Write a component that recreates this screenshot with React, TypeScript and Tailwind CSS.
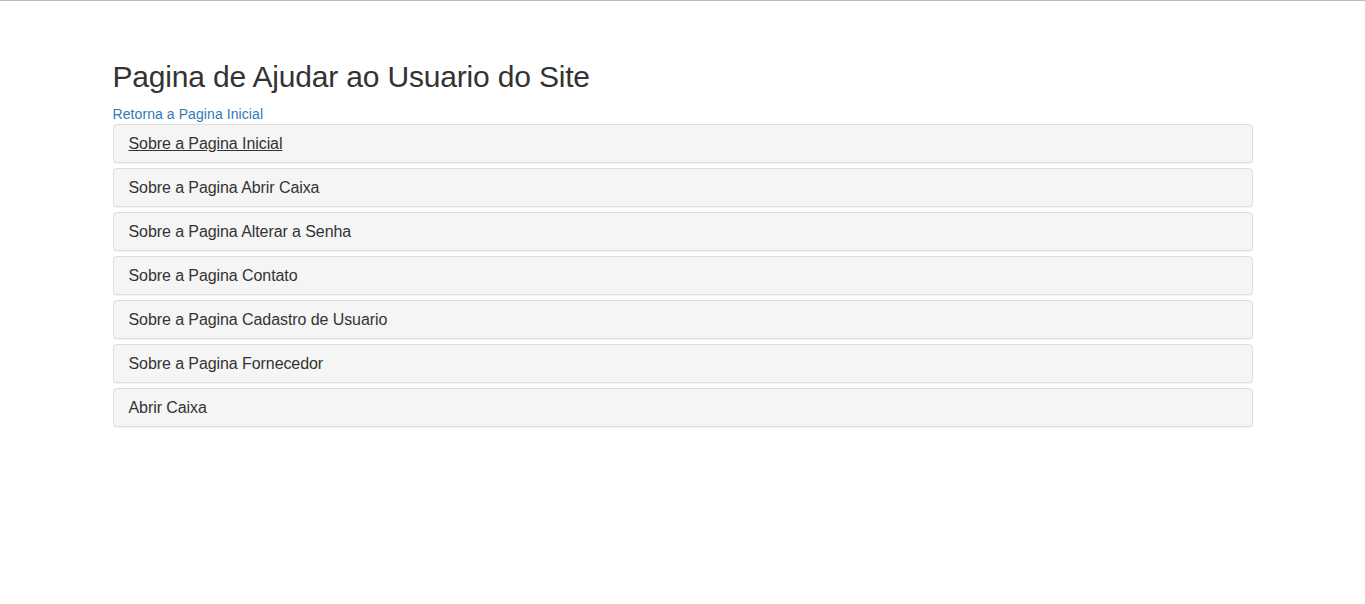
import React from 'react';

const sections = [
    "Sobre a Pagina Inicial",
    "Sobre a Pagina Abrir Caixa",
    "Sobre a Pagina Alterar a Senha",
    "Sobre a Pagina Contato",
    "Sobre a Pagina Cadastro de Usuario",
    "Sobre a Pagina Fornecedor",
    "Abrir Caixa"
];

const App = () => {
    return (
        <div className="min-h-[604px] bg-white border-t border-[#bbbbbb] text-[#333333] font-['Liberation_Sans',Arial,sans-serif]">
            <div className="w-[1170px] mx-auto px-[15px] pt-[59px]">
                <h2 className="text-[30px] leading-[33px] font-normal tracking-[-0.18px] mb-[11px]">
                    Pagina de Ajudar ao Usuario do Site
                </h2>
                <a href="#" className="block text-[14px] leading-[20px] tracking-[0.08px] text-[#337ab7] w-fit">
                    Retorna a Pagina Inicial
                </a>
                <div className="flex flex-col gap-[5px]">
                    {sections.map((title, index) => (
                        <div
                            key={index}
                            className="border border-[#dddddd] rounded-[4px] bg-[#f5f5f5] shadow-[0_1px_1px_rgba(0,0,0,0.05)]"
                        >
                            <div className="px-[15px] py-[10px]">
                                <a
                                    href="#"
                                    className={`text-[16px] leading-[17px] tracking-[-0.08px] block w-fit text-[#333333] ${index === 0 ? 'underline' : ''}`}
                                >
                                    {title}
                                </a>
                            </div>
                        </div>
                    ))}
                </div>
            </div>
        </div>
    );
};

export default App;
